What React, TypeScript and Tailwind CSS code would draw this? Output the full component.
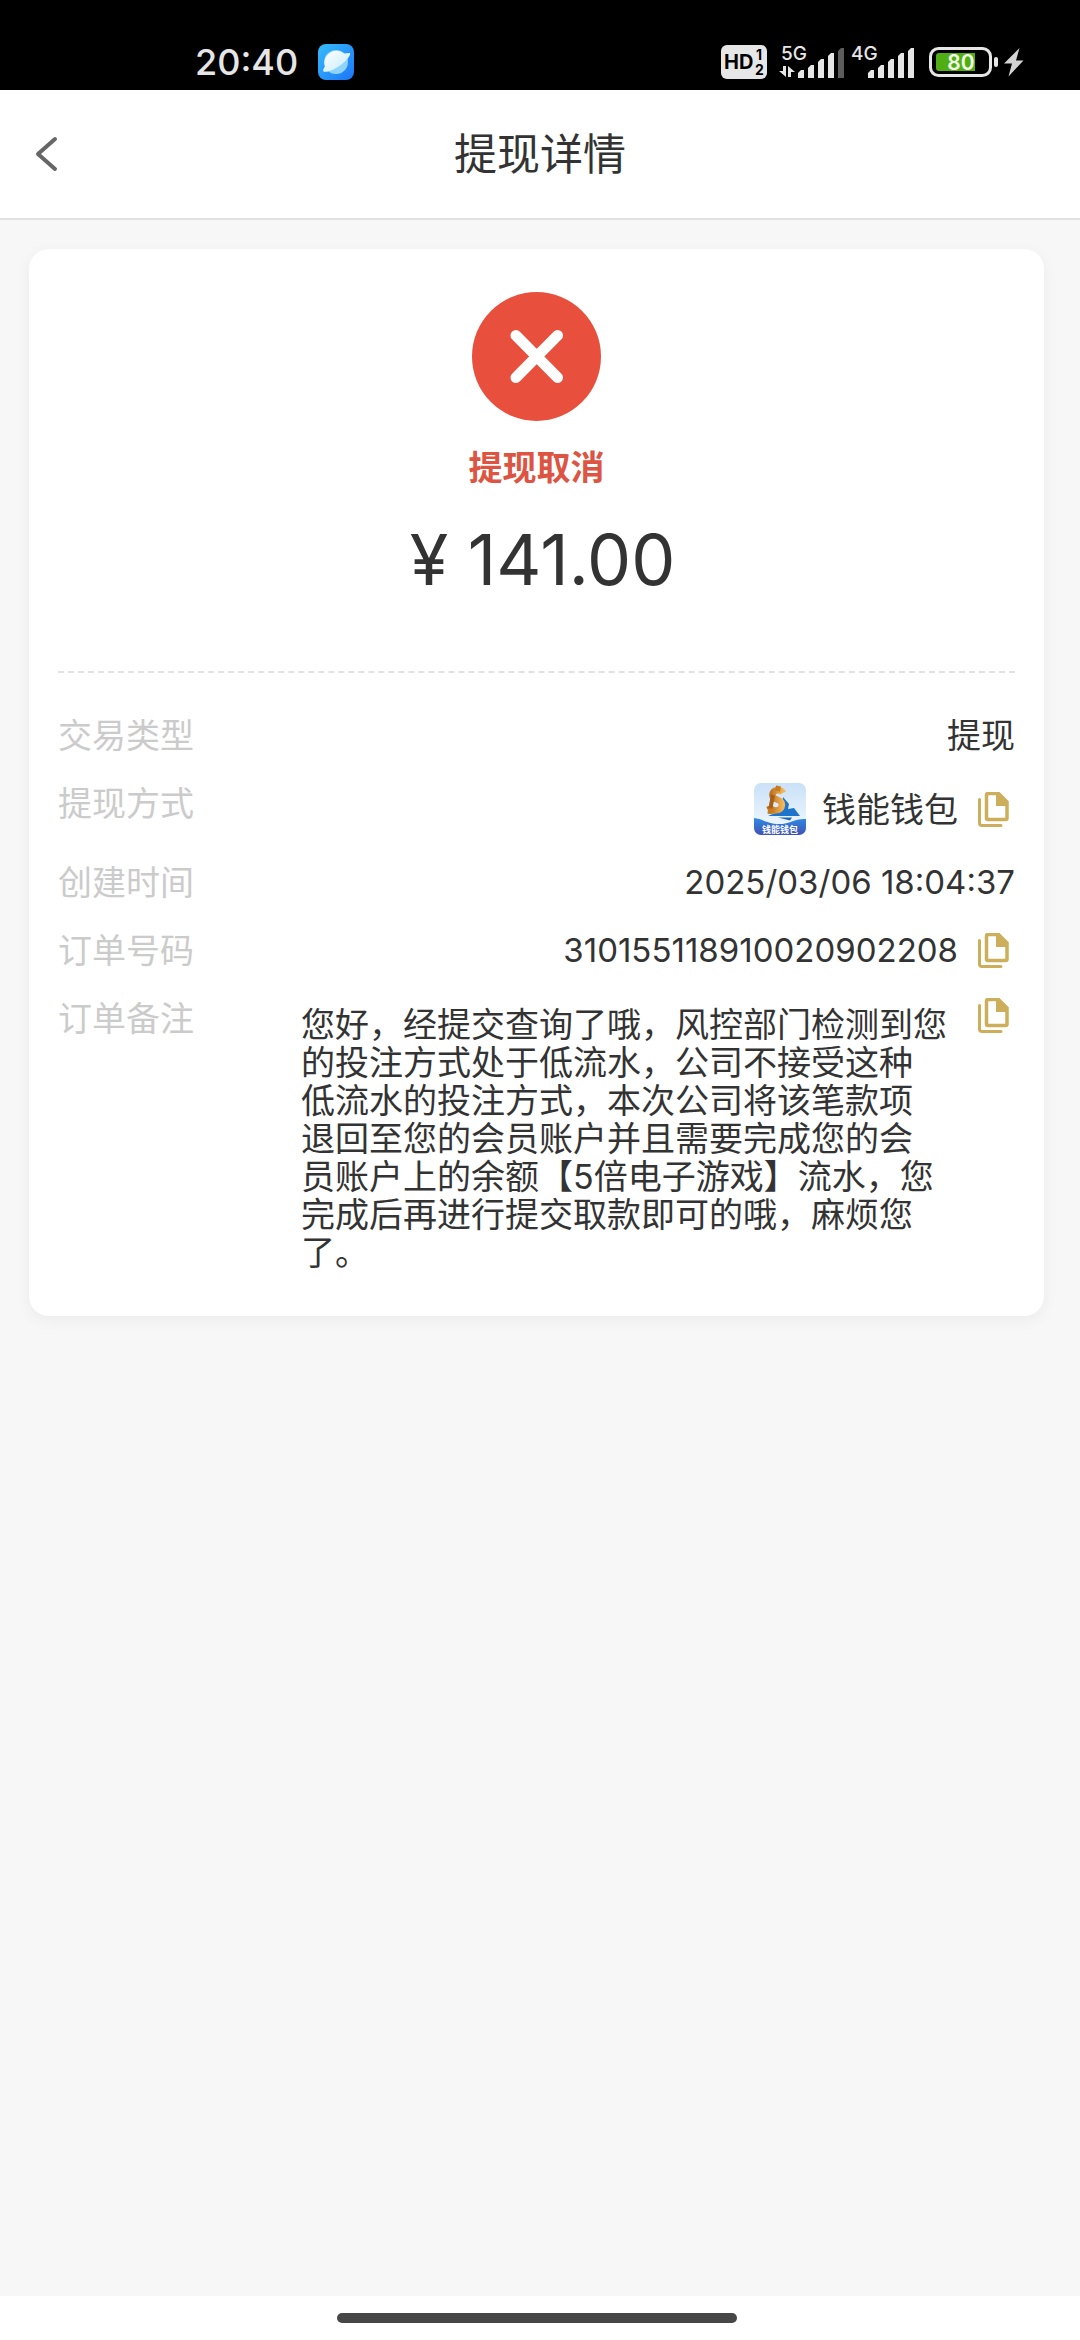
import type { ReactNode } from 'react'

const noteLines = [
  '您好，经提交查询了哦，风控部门检测到您',
  '的投注方式处于低流水，公司不接受这种',
  '低流水的投注方式，本次公司将该笔款项',
  '退回至您的会员账户并且需要完成您的会',
  '员账户上的余额【5倍电子游戏】流水，您',
  '完成后再进行提交取款即可的哦，麻烦您',
  '了。',
]

function BrowserIcon() {
  return (
    <svg width="36" height="36" viewBox="0 0 36 36" aria-hidden="true">
      <defs>
        <linearGradient id="browser-bg" x1="0" y1="0" x2="1" y2="1">
          <stop offset="0" stopColor="#35bdfb" />
          <stop offset="1" stopColor="#1d74f8" />
        </linearGradient>
        <linearGradient id="browser-planet" x1="0" y1="0" x2="1" y2="1">
          <stop offset="0" stopColor="#ffffff" />
          <stop offset="1" stopColor="#c5ecfd" />
        </linearGradient>
      </defs>
      <rect width="36" height="36" rx="8" fill="url(#browser-bg)" />
      <circle cx="18" cy="18" r="12" fill="#8ed4fb" />
      <path d="M26 9.500 L32 9 C33 11 29 16 24 20 C18 25 9 29 5.500 27.500 C4.500 26.500 5.500 24.500 7 22.500 A12 12 0 0 1 26 9.500Z" fill="url(#browser-planet)" />
    </svg>
  )
}

function HdBadge() {
  return (
    <svg width="46" height="34" viewBox="0 0 46 34" className="font-['Inter',sans-serif] font-bold" aria-hidden="true">
      <rect width="46" height="34" rx="6" fill="#e6e6e6" />
      <text x="3" y="24" fontSize="20">HD</text>
      <text x="35" y="15" fontSize="14">1</text>
      <text x="34" y="30" fontSize="14">2</text>
    </svg>
  )
}

function SignalBars({ x, dimLast }: { x: number; dimLast?: boolean }) {
  const tops = [25, 20, 14, 8, 3]
  return (
    <>
      {tops.map((top, i) => (
        <path
          key={top}
          d={`M${x + i * 10} 33 V${top + 3} L${x + i * 10 + 3} ${top} H${x + i * 10 + 6} V33Z`}
          fill={dimLast && i === 4 ? '#5c5c5c' : '#e6e6e6'}
        />
      ))}
    </>
  )
}

function BatteryIcon() {
  return (
    <svg width="69" height="34" viewBox="0 0 69 34" className="font-['Inter',sans-serif] font-semibold" aria-hidden="true">
      <rect x="1.500" y="3.500" width="60" height="27" rx="8" fill="none" stroke="#e6e6e6" strokeWidth="3" />
      <path d="M10 8 H46 V26 H10 Q7 26 7 23 V11 Q7 8 10 8Z" fill="#50ae14" />
      <rect x="65" y="12" width="4" height="10" rx="2" fill="#e6e6e6" />
      <text x="32" y="25" fontSize="21" textAnchor="middle" fill="#f2ffe8">80</text>
    </svg>
  )
}

function StatusBar() {
  return (
    <div className="flex h-[90px] items-center justify-between bg-black pt-[34px] pr-14 pl-[195px] text-[#e6e6e6]">
      <div className="flex items-center gap-5">
        <span className="font-['Inter',sans-serif] text-[36px] leading-[36px] font-medium">20:40</span>
        <BrowserIcon />
      </div>
      <div className="flex items-center">
        <HdBadge />
        <svg width="66" height="34" viewBox="0 0 66 34" overflow="visible" className="ml-3 font-['Inter',sans-serif] font-medium" aria-hidden="true">
          <text x="2" y="15" fontSize="19" fill="#e6e6e6">5G</text>
          <path d="M7 21 V32 L0 26 H4 V21Z M9 32 V21 L16 27 H12 V32Z" fill="#e6e6e6" />
          <SignalBars x={19} dimLast />
        </svg>
        <svg width="64" height="34" viewBox="0 0 64 34" overflow="visible" className="ml-1.5 font-['Inter',sans-serif] font-medium" aria-hidden="true">
          <text x="0" y="15" fontSize="19" fill="#e6e6e6">4G</text>
          <SignalBars x={17} />
        </svg>
        <span className="ml-3.5">
          <BatteryIcon />
        </span>
        <svg width="20" height="34" viewBox="0 0 20 34" className="ml-1.5" aria-hidden="true">
          <path d="M15.500 3 L0 18.500 H8 L4.500 31.500 L19.500 15.500 H12Z" fill="#d4d4d4" />
        </svg>
      </div>
    </div>
  )
}

function WalletLogo() {
  return (
    <svg width="52" height="52" viewBox="0 0 52 52" aria-hidden="true">
      <defs>
        <linearGradient id="wallet-sky" x1="0" y1="0" x2="0" y2="1">
          <stop offset="0" stopColor="#c9e1f8" />
          <stop offset="1" stopColor="#f6fbff" />
        </linearGradient>
        <linearGradient id="wallet-sea" x1="0" y1="0" x2="0" y2="1">
          <stop offset="0" stopColor="#2f8be4" />
          <stop offset="1" stopColor="#4250b4" />
        </linearGradient>
        <linearGradient id="wallet-gold" x1="0" y1="0" x2="1" y2="0">
          <stop offset="0" stopColor="#b9691a" />
          <stop offset="1" stopColor="#f3b659" />
        </linearGradient>
        <clipPath id="wallet-clip">
          <rect width="52" height="52" rx="7" />
        </clipPath>
      </defs>
      <g clipPath="url(#wallet-clip)">
        <rect width="52" height="52" fill="url(#wallet-sky)" />
        <path d="M29 14 L35 21 L34 26 L40 25 L46 33 L14 33 L28 27Z" fill="#1d74cd" />
        <path d="M24 34.500 H38 L36 37.500Z" fill="#1a66c0" />
        <path d="M29 10 C27 6 19 6 18.500 12 C18 18 28.500 15 28 22 C27.500 29 17 29 15.500 23" fill="none" stroke="url(#wallet-gold)" strokeWidth="6.500" />
        <path d="M19 12 L16.500 25" stroke="#a85f18" strokeWidth="4" />
        <path d="M24.500 3 L23.500 8 M16.500 26 L16 31" stroke="#c67a22" strokeWidth="5" />
        <path d="M0 35 C9 36 14 41 25 41 C37 41 41 35 52 36 V52 H0Z" fill="url(#wallet-sea)" />
        <text x="26" y="50" fontSize="9" textAnchor="middle" fill="#fff" className="font-['Noto_Sans_CJK_SC',sans-serif] font-bold">钱能钱包</text>
      </g>
    </svg>
  )
}

function CopyButton({ label }: { label: string }) {
  return (
    <button type="button" aria-label={label} className="mr-1.5 ml-5 shrink-0">
      <svg width="31" height="35" viewBox="0 0 31 35" fill="none">
        <path d="M1.500 7.500 V31 Q1.500 33.500 4 33.500 H23" stroke="#cdae5a" strokeWidth="3" strokeLinecap="round" />
        <path d="M10 1.500 H20.500 L29 10 V26 Q29 27.500 27.500 27.500 H10 Q8.500 27.500 8.500 26 V3 Q8.500 1.500 10 1.500Z" stroke="#cdae5a" strokeWidth="3.500" />
        <path d="M18 2 H21 L29 10 V14 H18Z" fill="#cdae5a" />
      </svg>
    </button>
  )
}

function Row({ label, children }: { label: string; children: ReactNode }) {
  return (
    <div className="flex items-start justify-between">
      <dt className="text-[#cbcbcb]">{label}</dt>
      <dd className="flex items-center">{children}</dd>
    </div>
  )
}

export default function App() {
  return (
    <div lang="zh-CN" className="flex min-h-screen flex-col bg-[#f7f7f7] font-['Inter','Noto_Sans_CJK_SC',sans-serif] text-[#333333]">
      <StatusBar />

      <header className="grid h-[130px] grid-cols-[1fr_auto_1fr] items-center border-b-2 border-[#e1e1e1] bg-white">
        <button type="button" aria-label="返回" className="ml-[34px] justify-self-start">
          <svg width="24" height="36" viewBox="0 0 24 36" fill="none">
            <path d="M21 3 L4 18 L21 33" stroke="#666" strokeWidth="4" strokeLinecap="round" strokeLinejoin="round" />
          </svg>
        </button>
        <h1 className="text-[43px] leading-[60px]">提现详情</h1>
      </header>

      <main className="flex-1 pt-[29px] pr-9 pb-9 pl-[29px]">
        <section className="rounded-[20px] bg-white px-[29px] pt-[43px] pb-11 shadow-[0_4px_16px_rgba(0,0,0,0.05)]">
          <div className="flex flex-col items-center border-b-2 border-dashed border-[#e2e2e2] pb-[75px]">
            <svg width="129" height="129" viewBox="0 0 129 129" aria-hidden="true">
              <circle cx="64.500" cy="64.500" r="64.500" fill="#e94f3d" />
              <path d="M44 43.500 L85.500 85.500 M85.500 43.500 L44 85.500" stroke="#fff" strokeWidth="11" strokeLinecap="round" />
            </svg>
            <p className="mt-[26px] text-[34px] leading-[41px] font-bold text-[#dd5442]">提现取消</p>
            <p className="mt-9 pl-3 text-[70px] leading-[72px]">¥ 141.00</p>
          </div>

          <dl className="mt-[42px] flex flex-col gap-[27px] text-[34px] leading-[41px]">
            <Row label="交易类型">提现</Row>
            <Row label="提现方式">
              <WalletLogo />
              <span className="ml-4">钱能钱包</span>
              <CopyButton label="复制提现方式" />
            </Row>
            <Row label="创建时间">
              <span className="text-[33px]">2025/03/06 18:04:37</span>
            </Row>
            <Row label="订单号码">
              <span className="text-[33px]">310155118910020902208</span>
              <CopyButton label="复制订单号码" />
            </Row>
            <div className="flex items-start">
              <dt className="w-[243px] shrink-0 text-[#cbcbcb]">订单备注</dt>
              <dd className="flex flex-1 items-start justify-between">
                <p className="mt-2 leading-[38px]">
                  {noteLines.map((line) => (
                    <span key={line} className="block whitespace-nowrap">{line}</span>
                  ))}
                </p>
                <CopyButton label="复制订单备注" />
              </dd>
            </div>
          </dl>
        </section>
      </main>

      <footer className="flex h-11 items-center justify-center bg-white pr-1.5">
        <div className="h-2.5 w-[400px] rounded-full bg-[#474747]" />
      </footer>
    </div>
  )
}
